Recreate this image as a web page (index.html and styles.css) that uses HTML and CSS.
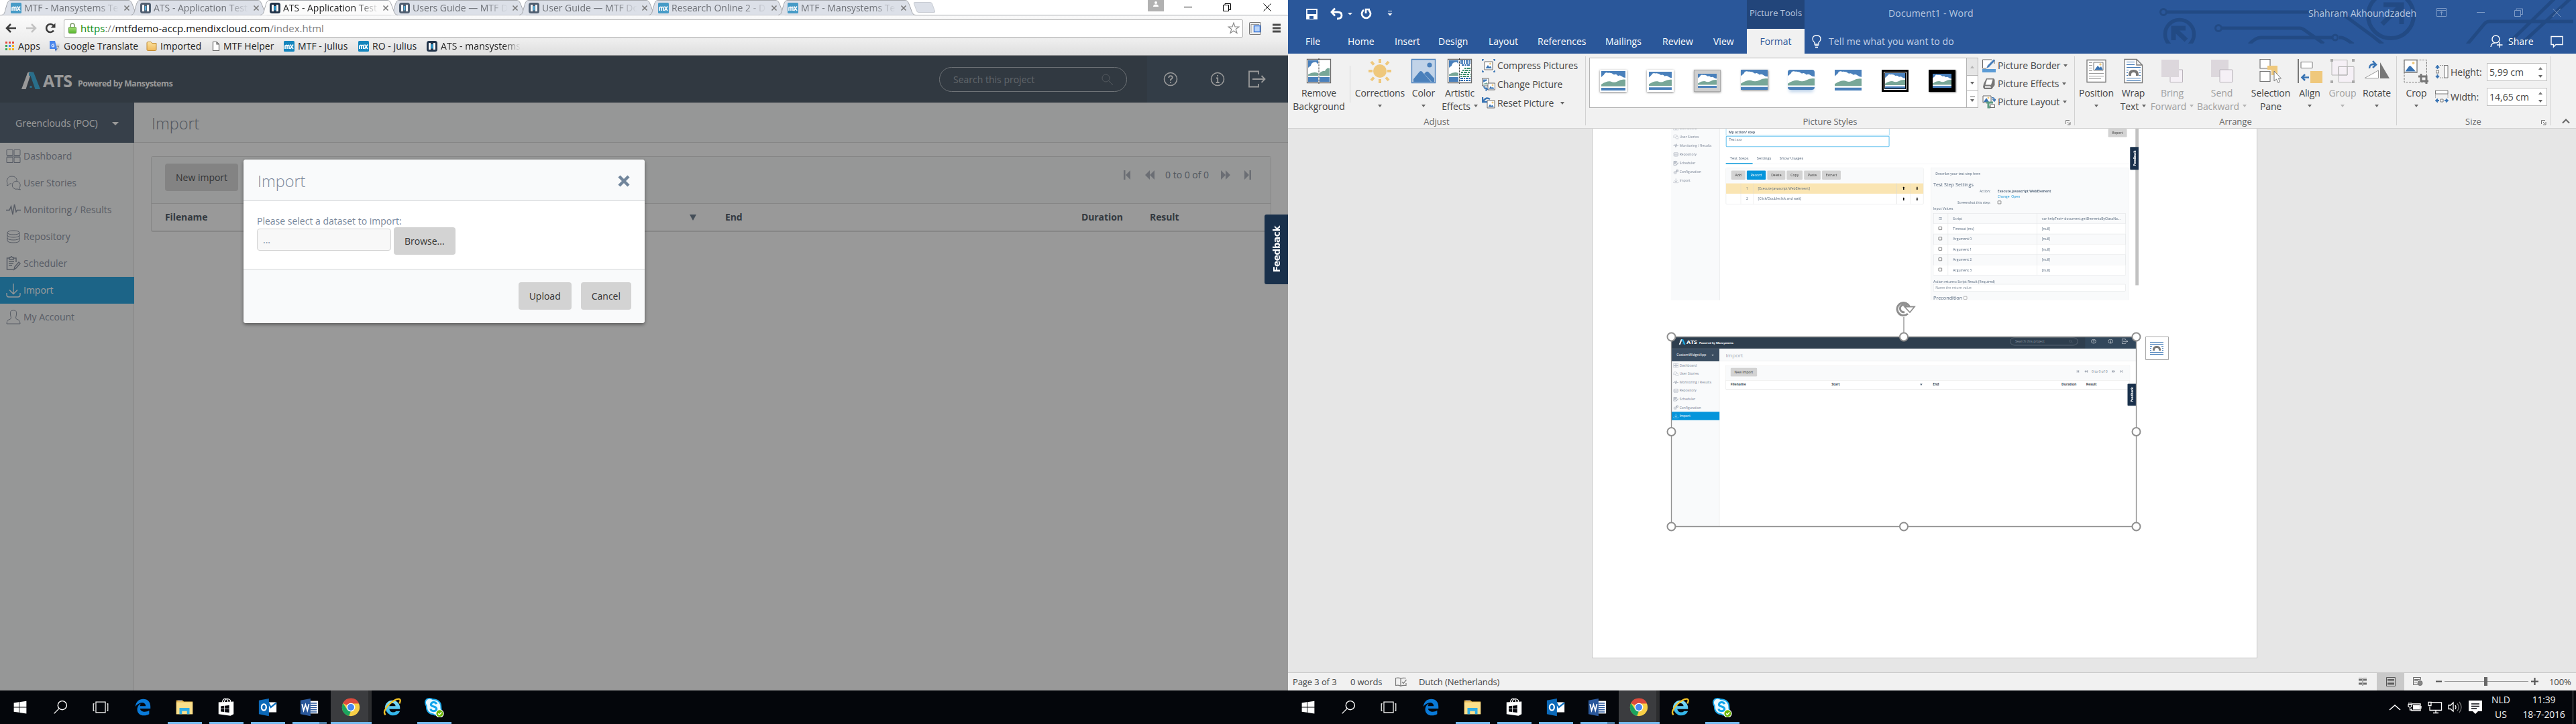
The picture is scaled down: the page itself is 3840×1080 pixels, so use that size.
FILE: index.html
```html
<!DOCTYPE html>
<html lang="en">
<head>
<meta charset="utf-8">
<title>ATS and Word desktop</title>
<link rel="stylesheet" href="styles.css">
</head>
<body>
<svg class="defs" width="0" height="0" aria-hidden="true">
  <defs>
    <linearGradient id="g-folder" x1="0" y1="0" x2="0" y2="1"><stop offset="0" stop-color="#fbe3a0"/><stop offset="1" stop-color="#f0b95c"/></linearGradient>
    <linearGradient id="g-lock" x1="0" y1="0" x2="0" y2="1"><stop offset="0" stop-color="#a8e07a"/><stop offset="1" stop-color="#56b52c"/></linearGradient>
    <linearGradient id="g-ie" x1="0" y1="0" x2="0" y2="1"><stop offset="0" stop-color="#8be3fb"/><stop offset="1" stop-color="#27aee6"/></linearGradient>
  </defs>
  <symbol id="tab-shape" viewBox="0 0 205 23"><path d="M0 22.5C5 22 5 18 7 11S10 .5 14 .5H189C193 .5 194 3 197 11S200 22 205 22.5" stroke="#a3a6ab"/></symbol>
  <symbol id="mx" viewBox="0 0 16 16"><rect width="16" height="16" rx="1.5" fill="#1485bd"/><path d="M2 12V6.500M2 8Q4.500 4.500 5 8V12M5 8Q8 4.500 8 8V12M9.500 5.500L14 12M14 5.500L9.500 12" fill="none" stroke="#fff" stroke-width="1.700"/></symbol>
  <symbol id="ats" viewBox="0 0 16 16"><rect width="16" height="16" rx="3.500" fill="#22344a"/><path d="M3 13V4Q3 3 4 3H6V13ZM10 3H12Q13 3 13 4V13H10Z" fill="#fff"/><path d="M6.800 5H9.200V11.500H6.800Z" fill="#2aa3dc"/></symbol>
  <symbol id="x" viewBox="0 0 10 10"><path d="M1.500 1.500L8.500 8.500M8.500 1.500L1.500 8.500" stroke="#777" stroke-width="1.600"/></symbol>
  <symbol id="logo" viewBox="0 0 28 26"><path d="M0 26L9 2Q10 .5 12 .5H15L13 6L6.500 26Z" fill="#fff"/><path d="M11 .5H18L28 26H20.500L13.500 6L11 6Z" fill="#1fa9e1"/><path d="M9 2Q10 .5 12 .5L9.500 6L8 5Z" fill="#fff"/><path d="M12.500 21h3v3h-3z" fill="#1fa9e1"/></symbol>
  <symbol id="search" viewBox="0 0 18 18"><circle cx="6.500" cy="6.500" r="5.500"/><path d="M10.500 10.500L17 17"/></symbol>
  <symbol id="help" viewBox="0 0 22 22"><circle cx="11" cy="11" r="9.500"/><path d="M8.200 9Q8.500 6.200 11 6.200T13.800 8.600Q13.800 10 11 11.800V13.500M11 15V16.800" stroke-width="1.800"/></symbol>
  <symbol id="info" viewBox="0 0 22 22"><circle cx="11" cy="11" r="9.500"/><path d="M11 5V7M9 9.500H11.200V16M8.700 16H13.700" stroke-width="1.800"/></symbol>
  <symbol id="exit" viewBox="0 0 26 26"><path d="M15 6V1.500H1V24.500H15V20M6 13H24M19.500 8L24.500 13L19.500 18" stroke-width="1.800"/></symbol>
  <symbol id="i-dash" viewBox="0 0 22 22"><path d="M1 1.500H10V9.500H1ZM12 1.500H21V9.500H12ZM1 12.500H10V20.500H1ZM12 12.500H21V20.500H12ZM1 11H21"/></symbol>
  <symbol id="i-story" viewBox="0 0 22 22"><path d="M8 11.500Q5 12 3.500 14L1.500 15L2 11.500Q0 8 2.500 4T9 1Q14 1 16 5.500L16 8M19.500 18.500L21.500 21L17 20A6 6 0 1 1 19.500 18.500"/></symbol>
  <symbol id="i-pulse" viewBox="0 0 22 22"><path d="M0 11.500H5L7.500 6L10 18L12.500 3L15 14L16.500 11.500H22" stroke-width="1.500"/></symbol>
  <symbol id="i-repo" viewBox="0 0 22 22"><path d="M2 5C2 1 20 1 20 5S2 9 2 5V17C2 21 20 21 20 17V5M2 9C2 13 20 13 20 9M2 13C2 17 20 17 20 13"/></symbol>
  <symbol id="i-sched" viewBox="0 0 22 22"><path d="M5 3H1.500V20H11M11 3H15V9M5 2H6.500L8 .5L9.500 2H11V5H5ZM4 8H12M4 11H11M4 14H9M12 20L13 16L19 9L21 11L15 18Z" stroke-width="1.500"/></symbol>
  <symbol id="i-import" viewBox="0 0 22 22"><path d="M11 1V16M5 10.500L11 16.500L17 10.500M1 15V18Q1 21 4 21H18Q21 21 21 18V15" stroke-width="1.300"/></symbol>
  <symbol id="i-user" viewBox="0 0 22 22"><path d="M7.500 12Q5 3 8 1.500T14 1.500T14.500 12Q14 14 19 15.500Q21 17 21 21H1Q1 17 3 15.500Q8 14 7.500 12Z"/></symbol>
  <symbol id="i-conf" viewBox="0 0 22 22"><circle cx="8" cy="14" r="6"/><circle cx="8" cy="14" r="2.500"/><path d="M13 2H20V9H14ZM12 9L18 3" stroke-width="1.800"/></symbol>
  <symbol id="pg-first" viewBox="0 0 12 14"><path d="M1 0H3.500V14H1ZM11 0V14L4 7Z"/></symbol>
  <symbol id="pg-prev" viewBox="0 0 16 14"><path d="M8 0V14L1 7ZM15 0V14L8 7Z"/></symbol>
  <symbol id="scene" viewBox="0 0 36 32" preserveAspectRatio="none"><path d="M0 0H36V32H0Z" fill="#fff"/><path d="M0 0H36V11Q33 11 31 9Q28 6 25 8Q22 4 19 6Q15 2 10 3Q6 1 4 6L0 10Z" fill="#4a80bb"/><path d="M0 25V22Q8 16 14 17Q19 20 24 17Q30 13 36 14V25Z" fill="#78a798"/><path d="M0 27.500H36V32H0Z" fill="#4a80bb"/></symbol>
  <symbol id="w-remove" viewBox="0 0 38 38"><path d="M1.500 1.500H36.500V36.500H1.500Z" fill="#fff" stroke="#6b6b6b" stroke-width="1.300"/><path d="M3 3H18V9Q15 4 12 6Q8 6 7 11L3 14Z" fill="#4a80bb"/><path d="M3 24Q11 19 18 22V26H3ZM20 22Q25 18 28 19Q31 13 35 15V26H20Z" fill="#78a798"/><path d="M3 28H18V35H3ZM20 28H35V35H20Z" fill="#4a80bb"/><path d="M19 0V38" stroke="#444" stroke-dasharray="3 1.500"/></symbol>
  <symbol id="w-art" viewBox="0 0 38 38"><path d="M1.500 1.500H36.500V36.500H1.500Z" fill="#fff" stroke="#6b6b6b" stroke-width="1.300"/><path d="M3 3H17V9Q15 4 12 6Q8 6 7 11L3 14Z" fill="#4a80bb"/><path d="M3 24Q11 19 17 22V26H3Z" fill="#78a798"/><path d="M3 28H17V35H3Z" fill="#4a80bb"/><path d="M20 4H35M20 7H35M22 10H35M20 30H35M20 33H35" stroke="#2e6bb0" stroke-width="2" stroke-dasharray="4 1 2 1"/><path d="M26 15H35M23 18H35M21 21H35M20 24H35M20 27H35" stroke="#3f9070" stroke-width="2" stroke-dasharray="3 1 5 1"/><path d="M18.500 0V38" stroke="#444" stroke-dasharray="3 1.500"/></symbol>
  <symbol id="w-sun" viewBox="0 0 38 38"><circle cx="19" cy="19" r="10" fill="#efc87c"/><path d="M19 1V7M19 31V37M2 19H8M30 19H36M6 5L10 9.500M28 28.500L32 33M32 5L28 9.500M10 28.500L6 33" stroke="#efc87c" stroke-width="4"/></symbol>
  <symbol id="w-color" viewBox="0 0 38 38"><path d="M1.500 1.500H36.500V36.500H1.500Z" fill="#c1d3e8" stroke="#4a80bb" stroke-width="1.300"/><circle cx="28" cy="10" r="3.600" fill="#4a80bb"/><path d="M4 35V31L13 20Q15 18 17 20L30 35ZM20 23L23 20Q25 19 27 21L35 30V35H31Z" fill="#4a80bb"/></symbol>
  <symbol id="w-comp" viewBox="0 0 20 20"><path d="M4 4H16V16H4Z" fill="#fff" stroke="#666"/><path d="M5.500 14L9 9L11 12L12.500 10.500L15 14Z" fill="#3873b3"/><circle cx="12.500" cy="7" r="1.500" fill="#efc87c"/><path d="M0 1H3M1 0V3M17 1H20M19 0V3M0 19H3M1 17V20M17 19H20M19 17V20" stroke="#3873b3" stroke-width="1.500"/></symbol>
  <symbol id="w-change" viewBox="0 0 20 20"><path d="M.5 1H10V12H.5Z" fill="#fff" stroke="#666"/><path d="M2 2.500H8V4L2 7Z" fill="#4a80bb"/><path d="M2 9L8 7V10H2Z" fill="#78a798"/><path d="M9 8H19.500V18H9Z" fill="#fff" stroke="#666"/><path d="M10.500 16.500L13 12.500L15 15L16.500 13.500L18.500 16.500Z" fill="#3873b3"/><circle cx="16" cy="11" r="1.400" fill="#efc87c"/><path d="M3 12Q3 17 8 17M5.500 14.500L8.500 17L5.500 19.500" fill="none" stroke="#3873b3" stroke-width="1.600"/></symbol>
  <symbol id="w-reset" viewBox="0 0 20 20"><path d="M8 6H19V17H8Z" fill="#fff" stroke="#666"/><path d="M9.500 15.500L12 11.500L14 14L15.500 12.500L18 15.500Z" fill="#3873b3"/><circle cx="16" cy="9" r="1.500" fill="#efc87c"/><path d="M2 7Q6 0 12 4M1 1V8H8" fill="none" stroke="#3873b3" stroke-width="2.400"/></symbol>
  <symbol id="w-border" viewBox="0 0 20 20"><path d="M14 1H.5V14H6M18 7V1" fill="#fff" stroke="#666"/><path d="M6 14L8 9.500L17 .5L19 2.500L10 12Z" fill="#4a80bb"/><path d="M0 15H20V20H0Z" fill="#5b9bd5"/></symbol>
  <symbol id="w-effect" viewBox="0 0 20 20"><path d="M6 2H17L18.500 4V12L14 18H3L1 15L2 10Z" fill="#777"/><path d="M7 3.500H15.500L13 11.500H4.500Z" fill="#fff"/><path d="M4 13H12L13 16H4Z" fill="#d5d5d5"/></symbol>
  <symbol id="w-layout" viewBox="0 0 20 20"><path d="M1 1H13V11H1Z" fill="#fff" stroke="#666"/><path d="M2 10L6 4L10 10Z" fill="#3873b3"/><circle cx="9" cy="4" r="1.500" fill="#efc87c"/><path d="M6 11H16M9 11V18H12" fill="none" stroke="#5d9c83" stroke-width="3"/><path d="M12 14H18.500V18.500H12Z" fill="#fff" stroke="#666"/><path d="M14 4Q18 3 18 7M15.500 6L18 9L20 6" fill="none" stroke="#3873b3" stroke-width="1.600"/></symbol>
  <symbol id="w-pos" viewBox="0 0 38 38"><path d="M5 2.500H33V35.500H5Z" fill="#fff" stroke="#777" stroke-width="1.300"/><path d="M8 6.500H13M8 10.500H13M8 14.500H13M8 18.500H13M8 22.500H30M8 26.500H30M8 30.500H26" stroke="#9a9a9a"/><path d="M15 6H29V18H15Z" fill="#fff" stroke="#777"/><path d="M16.500 17L21 11L24 14L26 12L28.500 17Z" fill="#3873b3"/><circle cx="25" cy="9" r="1.700" fill="#efc87c"/></symbol>
  <symbol id="w-wrap" viewBox="0 0 38 38"><path d="M6 1.500H24L32.500 10V36.500H6ZM24 1.500V10H32.500" fill="#fff" stroke="#777" stroke-width="1.300"/><path d="M9 5.500H21M9 9.500H21M9 13.500H30M9 17.500H12M27 17.500H30M9 21.500H11M28 21.500H30M9 25.500H11M28 25.500H30M9 29.500H30M9 33.500H30" stroke="#3873b3" stroke-width="1.200"/><path d="M14 26V24Q14 19 19.500 19T25 24V26" fill="none" stroke="#777" stroke-width="4"/></symbol>
  <symbol id="w-bring" viewBox="0 0 38 38"><path d="M16 17H34.500V35.500H16Z" fill="#f5f0f6" stroke="#b9b2ba"/><path d="M3 2H29V28H3Z" fill="#dcd7dc"/></symbol>
  <symbol id="w-send" viewBox="0 0 38 38"><path d="M3 2H29V28H3Z" fill="#dcd7dc"/><path d="M16 17H34.500V35.500H16Z" fill="#f5f0f6" stroke="#b9b2ba"/></symbol>
  <symbol id="w-select" viewBox="0 0 38 38"><path d="M3 1.500H18V15H3ZM3 19.500H18V34.500H3Z" fill="#fff" stroke="#777" stroke-width="1.200"/><path d="M14 11H29V25H20V17H14Z" fill="#efc87c"/><path d="M24 19V34L27.500 31L30 36.500L32.500 35L30.500 30H34.500Z" fill="#fff" stroke="#777"/></symbol>
  <symbol id="w-align" viewBox="0 0 38 38"><path d="M2 1V37" stroke="#777" stroke-width="2"/><path d="M6 5.500H23V14.500H6Z" fill="#fff" stroke="#777"/><path d="M20 19H38V37H20Z" fill="#efc87c"/><path d="M18 28.500H8M12 24L7.500 28.500L12 33" fill="none" stroke="#3873b3" stroke-width="2.500"/></symbol>
  <symbol id="w-group" viewBox="0 0 38 38"><path d="M3 2.500H26V25H3ZM13 12.500H36V35.500H13Z" fill="#f5f0f6" stroke="#b5b5b5"/><path d="M13 12.500H26V25H13Z" fill="none" stroke="#b5b5b5"/><path d="M1 1H5V5H1ZM33 1H37V5H33ZM1 33H5V37H1ZM33 33H37V37H33Z" fill="#aaa"/></symbol>
  <symbol id="w-rotate" viewBox="0 0 38 38"><path d="M1 29.500L21.500 18V29.500Z" fill="#fff" stroke="#999"/><path d="M24 6V30H38Z" fill="#777"/><path d="M8 15Q8 8 16 9M13 4L18 9.500L13 14" fill="none" stroke="#3873b3" stroke-width="2.600"/></symbol>
  <symbol id="w-crop" viewBox="0 0 38 38"><path d="M1 2.500H34.500V35.500H1Z" fill="none" stroke="#777" stroke-dasharray="3 1.500"/><path d="M1 2.500H20V21H1Z" fill="#fff" stroke="#777" stroke-width="1.300"/><path d="M2.500 19.500L8 12Q10 10 12 13L18 19.500Z" fill="#3873b3"/><circle cx="14.500" cy="7" r="2" fill="#efc87c"/><path d="M26 23V34H37M22 27H34V38" fill="none" stroke="#777" stroke-width="3"/></symbol>
  <symbol id="w-height" viewBox="0 0 20 20"><path d="M14 .5H19V19H14Z" fill="#fff" stroke="#777"/><path d="M7 .5H14M7 19H14" stroke="#777" stroke-dasharray="1.500 1.500"/><path d="M1.500 8H5.500V12H1.500Z" fill="#fff" stroke="#777"/><path d="M3.500 6V1M1 4L3.500 1L6 4M3.500 14V19M1 16L3.500 19L6 16" fill="none" stroke="#3873b3" stroke-width="1.800"/></symbol>
  <symbol id="w-width" viewBox="0 0 20 20"><path d="M.5 1H19V6H.5Z" fill="#fff" stroke="#777"/><path d="M.5 7V13M19 7V13" stroke="#777" stroke-dasharray="1.500 1.500"/><path d="M8 14H12V18H8Z" fill="#fff" stroke="#777"/><path d="M6 16H1M4 13.500L1 16L4 18.500M14 16H19M16 13.500L19 16L16 18.500" fill="none" stroke="#3873b3" stroke-width="1.800"/></symbol>
  <symbol id="launch" viewBox="0 0 8 8"><path d="M.5 6V.5H6M3 3L6 6M7 3V7H3" fill="none" stroke="#777"/></symbol>
  <symbol id="t-win" viewBox="0 0 32 32"><path d="M6 9L14 7.800V15.500H6ZM15 7.600L26 6V15.500H15ZM6 16.500H14V24.300L6 23.200ZM15 16.500H26V26L15 24.500Z" fill="#fff"/></symbol>
  <symbol id="t-search" viewBox="0 0 32 32"><circle cx="19" cy="13" r="7" fill="none" stroke="#fff" stroke-width="1.500"/><path d="M14 18L6 26" stroke="#fff" stroke-width="1.500"/></symbol>
  <symbol id="t-view" viewBox="0 0 32 32"><path d="M8.500 7.500H23.500V24.500H8.500ZM6 10.500H4.500V21.500H6M26 10.500H27.500V21.500H26" fill="none" stroke="#fff" stroke-width="1.300"/></symbol>
  <symbol id="t-edge" viewBox="0 0 32 32"><path d="M4 15C5 7 10 3 16.500 3C24 3 28 8 28 15V18H11.500C12 23 20 25 26 21V27C17 32 6 28 7 18C7.500 14 10 11 13 10C11.500 11.500 11.500 13 11.500 14H20.500C20.500 7 10 7 4 15Z" fill="#0a7ad8"/></symbol>
  <symbol id="t-folder" viewBox="0 0 32 32"><path d="M3 5H13L15 7H29V27H3Z" fill="#e6b34a"/><path d="M3 8H29V27H3Z" fill="#fbdf8b"/><path d="M8 27V17H24V27H20V22H12V27Z" fill="#32aee6"/><path d="M5 6H12" stroke="#fff"/></symbol>
  <symbol id="t-store" viewBox="0 0 32 32"><path d="M10 8Q11 2 15 2.500T19 8M13 8Q15 1 20 3T22 8" fill="none" stroke="#fff" stroke-width="1.300"/><path d="M4 8L28 7V27L23 29.500L4 27Z" fill="#fff"/><path d="M7.500 14.500L13 13.700V18H7.500ZM14 13.600L21 12.800V18H14ZM7.500 19H13V23.500L7.500 23ZM14 19H21V24.500L14 23.700Z" fill="#05060c"/></symbol>
  <symbol id="t-outlook" viewBox="0 0 32 32"><path d="M16 8H30V24H16Z" fill="#fff"/><path d="M17 9L21 16L30 9" fill="none" stroke="#0e6fbf" stroke-width="2.500"/><path d="M2 5L18 2V30L2 27Z" fill="#0c69b8"/><ellipse cx="10" cy="16" rx="3.700" ry="5" fill="none" stroke="#fff" stroke-width="2.400"/></symbol>
  <symbol id="t-word" viewBox="0 0 32 32"><path d="M16 6H30V26H16Z" fill="#fff"/><path d="M18 9.500H28M18 13H28M18 16.500H28M18 20H28M18 23.500H28" stroke="#2a579a" stroke-width="1.600"/><path d="M2 5L18 2V30L2 27Z" fill="#2a579a"/><path d="M4.500 11L7 21L10 12L13 21L15.500 11" fill="none" stroke="#fff" stroke-width="2"/></symbol>
  <symbol id="t-chrome" viewBox="0 0 32 32"><circle cx="16" cy="16" r="14" fill="#f7ce46"/><path d="M16 16L3.500 9.500A14 14 0 0 1 29 10H16Z" fill="#dc4a3d"/><path d="M3.500 9.500L10 19.500L16 22L13 29.800A14 14 0 0 1 3.500 9.500Z" fill="#1ba35e"/><circle cx="16" cy="16" r="6.800" fill="#fff"/><circle cx="16" cy="16" r="5.300" fill="#4886f0"/></symbol>
  <symbol id="t-ie" viewBox="0 0 32 32"><path d="M4 17A12 12 0 0 1 28 17V19H11Q12 24 17 24Q20 24 22 22H28Q25 29 16.500 29T4 17ZM11 14H21Q20 9.500 16 9.500T11 14Z" fill="url(#g-ie)"/><path d="M5 28C-3 22 18 1 27 3Q30 4 27 10" fill="none" stroke="#f5c426" stroke-width="2.500"/></symbol>
  <symbol id="t-skype" viewBox="0 0 32 32"><path d="M2 8Q3 2 9 2Q12 2 14 3.500Q27 4 27 16Q29 25 22 28Q17 29 15 27Q4 26 4 14Q2 11 2 8Z" fill="#e9f8ff" stroke="#1cabee" stroke-width="2"/><path d="M20 11Q19 8 15.500 8T11 11.500Q11 14 15.500 15T20 19Q20 22 15.500 22T10.500 18.500" fill="none" stroke="#12a5eb" stroke-width="3.200"/><circle cx="25" cy="26" r="6" fill="#6bb700" stroke="#fff" stroke-width="1.300"/><path d="M22.500 26L24.500 28L28 24" fill="none" stroke="#fff" stroke-width="1.600"/></symbol>
</svg>

<div class="desktop">
<section class="monitor">
  <div class="browser">
    <div class="tabstrip">
      <div class="tab"><svg class="shape"><use href="#tab-shape"/></svg><svg class="fav"><use href="#mx"/></svg><span class="name">MTF - Mansystems Te</span><svg class="shut"><use href="#x"/></svg></div>
      <div class="tab"><svg class="shape"><use href="#tab-shape"/></svg><svg class="fav"><use href="#ats"/></svg><span class="name">ATS - Application Test</span><svg class="shut"><use href="#x"/></svg></div>
      <div class="tab current"><svg class="shape"><use href="#tab-shape"/></svg><svg class="fav"><use href="#ats"/></svg><span class="name">ATS - Application Test</span><svg class="shut"><use href="#x"/></svg></div>
      <div class="tab"><svg class="shape"><use href="#tab-shape"/></svg><svg class="fav"><use href="#ats"/></svg><span class="name">Users Guide — MTF D</span><svg class="shut"><use href="#x"/></svg></div>
      <div class="tab"><svg class="shape"><use href="#tab-shape"/></svg><svg class="fav"><use href="#ats"/></svg><span class="name">User Guide — MTF Do</span><svg class="shut"><use href="#x"/></svg></div>
      <div class="tab"><svg class="shape"><use href="#tab-shape"/></svg><svg class="fav"><use href="#mx"/></svg><span class="name">Research Online 2 - D</span><svg class="shut"><use href="#x"/></svg></div>
      <div class="tab"><svg class="shape"><use href="#tab-shape"/></svg><svg class="fav"><use href="#mx"/></svg><span class="name">MTF - Mansystems Te</span><svg class="shut"><use href="#x"/></svg></div>
      <span class="newtab"></span>
      <div class="wincontrols">
        <svg width="24" height="17"><path d="M0 0H24V17H0Z" fill="#b1b1b1"/><circle cx="12" cy="4" r="2" fill="#fff"/><path d="M8 10Q8 6.500 12 6.500T16 10Z" fill="#fff"/></svg>
        <svg width="12" height="20"><path d="M0 10.500H12" stroke="#000"/></svg>
        <svg width="12" height="20"><path d="M.5 7.500H8.500V16.500H.5ZM3 7.500V5.500H11.500V14.500H9" fill="none" stroke="#000"/></svg>
        <svg width="12" height="20"><path d="M.5 5.500L11.500 16.500M11.500 5.500L.5 16.500" stroke="#000"/></svg>
      </div>
    </div>
    <div class="toolbar">
      <svg width="80" height="18" class="nav"><path d="M16 9H2M8 3L2 9L8 15" fill="none" stroke="#3c3c3c" stroke-width="2.500"/><path d="M31 9H45M39 3L45 9L39 15" fill="none" stroke="#c3c3c3" stroke-width="2.500"/><path d="M72 12.500A6 6 0 1 1 72 5.500" fill="none" stroke="#3c3c3c" stroke-width="2.600"/><path d="M74.500 1.500V8.500H67.500Z" fill="#3c3c3c"/></svg>
      <div class="omnibox">
        <svg width="12" height="16"><path d="M3 7V4Q3 1 6 1T9 4V7" fill="none" stroke="#7d9a6a" stroke-width="1.600"/><rect x=".5" y="6.500" width="11" height="9" rx="1" fill="url(#g-lock)" stroke="#5a9440"/></svg>
        <span class="url"><i class="ok">https</i><i class="dim">://</i>mtfdemo-accp.mendixcloud.com<i class="dim">/index.html</i></span>
        <svg width="18" height="18" viewBox="0 0 18 18"><path d="M9 1L11 7H17L12.200 10.500L14 16.500L9 13L4 16.500L5.800 10.500L1 7H7Z" fill="none" stroke="#888" stroke-width="1.100"/></svg>
      </div>
      <svg width="18" height="19" class="ext"><rect x=".5" y=".5" width="17" height="18" rx="1" fill="#ececec" stroke="#777"/><path d="M3 3V16M3 3.500H15" stroke="#999"/><path d="M7.500 5.500H16.500V14.500H7.500Z" fill="#b8d3f8" stroke="#3d78d8" stroke-width="1.500"/></svg>
      <svg width="14" height="14"><path d="M1 2H13M1 7H13M1 12H13" stroke="#4a4a4a" stroke-width="3"/></svg>
    </div>
    <div class="bookmarks">
      <span><svg width="14" height="14" viewBox="0 0 14 14"><path d="M0 0H3V3H0ZM5 0H8V3H5ZM10 0H13V3H10Z" fill="#e3493b"/><path d="M0 5H3V8H0Z" fill="#35a853"/><path d="M5 5H8V8H5Z" fill="#4285f4"/><path d="M10 5H13V8H10ZM5 10H8V13H5ZM10 10H13V13H10Z" fill="#f2b512"/><path d="M0 10H3V13H0Z" fill="#35a853"/></svg>Apps</span>
      <span><svg width="16" height="16"><path d="M6 4H15V16H9Z" fill="#dcdcdc"/><path d="M0 0H8L11 12H0Z" fill="#4a86ec"/><path d="M8 12H11L9 16Z" fill="#2b5cb5"/><path d="M7 5H5Q3 5 3 7T5 9T7 7H5" fill="none" stroke="#fff"/><path d="M10 8H14M12 7V8M13.500 8Q13 11 10.500 13" fill="none" stroke="#888"/></svg>Google Translate</span>
      <span><svg width="16" height="16"><path d="M1 3Q1 1.500 2.500 1.500H7L8.500 3.500H15V13Q15 14.500 13.500 14.500H2.500Q1 14.500 1 13Z" fill="url(#g-folder)" stroke="#c08a33"/></svg>Imported</span>
      <span><svg width="12" height="16"><path d="M1.500 1.500H7L10.500 5V14.500H1.500ZM7 1.500V5H10.500" fill="#fff" stroke="#666" stroke-width="1.200"/></svg>MTF Helper</span>
      <span><svg width="16" height="16"><use href="#mx"/></svg>MTF - julius</span>
      <span><svg width="16" height="16"><use href="#mx"/></svg>RO - julius</span>
      <span class="fade"><svg width="16" height="16"><use href="#ats"/></svg>ATS - mansystems</span>
    </div>

    <div class="viewport">
      <div class="app">
        <header class="apphead">
          <svg class="logo"><use href="#logo"/></svg><b class="brand">ATS</b><b class="tagline">Powered by Mansystems</b>
          <div class="find"><span>Search this project</span><svg width="18" height="18"><use href="#search"/></svg></div>
          <div class="headicons"><svg width="22" height="22"><use href="#help"/></svg><svg width="22" height="22"><use href="#info"/></svg><svg width="26" height="26"><use href="#exit"/></svg></div>
        </header>
        <nav class="side">
          <div class="project"><span>Greenclouds (POC)</span><i class="caret"></i></div>
          <a><svg><use href="#i-dash"/></svg>Dashboard</a>
          <a><svg><use href="#i-story"/></svg>User Stories</a>
          <a><svg><use href="#i-pulse"/></svg>Monitoring / Results</a>
          <a><svg><use href="#i-repo"/></svg>Repository</a>
          <a><svg><use href="#i-sched"/></svg>Scheduler</a>
          <a class="on"><svg><use href="#i-import"/></svg>Import</a>
          <a><svg><use href="#i-user"/></svg>My Account</a>
        </nav>
        <main class="main">
          <h1>Import</h1>
          <div class="panel">
            <div class="panelbar"><span class="btn">New import</span>
              <div class="pager"><svg width="12" height="14"><use href="#pg-first"/></svg><svg width="16" height="14"><use href="#pg-prev"/></svg><span>0 to 0 of 0</span><svg class="flip" width="16" height="14"><use href="#pg-prev"/></svg><svg class="flip" width="12" height="14"><use href="#pg-first"/></svg></div>
            </div>
            <div class="heads"><span>Filename</span><span></span><i class="sort"></i><span>End</span><span>Duration</span><span>Result</span></div>
          </div>
        </main>
      </div>
      <div class="shade"></div>
      <div class="feedback"><span>Feedback</span></div>
      <div class="modal">
        <div class="mhead"><span>Import</span><svg width="20" height="18" viewBox="0 0 20 18"><path d="M3 2L17 16M17 2L3 16" stroke="#72869c" stroke-width="4.500"/></svg></div>
        <div class="mbody"><label>Please select a dataset to import:</label><div class="pick"><span class="field">...</span><span class="btn">Browse...</span></div></div>
        <div class="mfoot"><span class="btn">Upload</span><span class="btn">Cancel</span></div>
      </div>
    </div>
  </div>
  <footer class="taskbar">
    <span><svg><use href="#t-win"/></svg></span><span><svg><use href="#t-search"/></svg></span><span><svg><use href="#t-view"/></svg></span><span class="slot"><svg><use href="#t-edge"/></svg></span><span class="slot run"><svg><use href="#t-folder"/></svg></span><span class="slot run"><svg><use href="#t-store"/></svg></span><span class="slot run"><svg><use href="#t-outlook"/></svg></span><span class="slot run many"><svg><use href="#t-word"/></svg></span><span class="slot run active"><svg><use href="#t-chrome"/></svg></span><span class="slot"><svg><use href="#t-ie"/></svg></span><span class="slot run"><svg><use href="#t-skype"/></svg></span>
  </footer>
</section>

<section class="monitor">
  <div class="word">
    <div class="wtitle">
      <svg class="circuit" width="630" height="65" fill="none" stroke="#224a84" stroke-width="5"><circle cx="15" cy="18" r="4.500" stroke-width="3"/><path d="M20 18H278L327 54Q337 62 342 66"/><circle cx="97" cy="42" r="4.500" stroke-width="3"/><path d="M102 42H218Q222 42 227 46L254 65M143 66Q152 56 160 56H267M277 56H280Q285 56 298 66"/><circle cx="271" cy="56" r="4" stroke-width="3"/><circle cx="39" cy="51" r="21.500" stroke-width="5.500"/><circle cx="354" cy="23" r="34" stroke-width="6"/><path d="M30 60V42H48M31 43L49 60M343 7H370V36M369 8L341 36" stroke-width="7"/><path d="M468 66L494 35Q497 32 501 32H626M550 64L626 -6M528 66L604 -8"/></svg>
      <div class="qat"><svg width="130" height="22" viewBox="0 0 130 22" fill="none" stroke="#fff"><path d="M1 4H16V18H1Z" stroke-width="1.800"/><path d="M1 11H16V18H1Z" fill="#fff" stroke="none"/><path d="M5 14H11V18H5Z" fill="#2a579a" stroke="none"/><path d="M39 8H47Q53 8 53 13T46 18M43 2.500L38 8L43 13.500" stroke-width="2.800"/><path d="M62 9H69L65.500 12.500Z" fill="#fff" stroke="none"/><path d="M86 5A6.500 6.500 0 1 0 93 5M89 10V4H95" stroke-width="2.700"/><path d="M122 6.500H128" /><path d="M121.500 10H128.500L125 13.500Z" fill="#fff" stroke="none"/></svg></div>
      <span class="ptools">Picture Tools</span>
      <span class="doc">Document1 - Word</span>
      <span class="who">Shahram Akhoundzadeh</span>
      <svg class="wctl" width="190" height="20" fill="none" stroke="#7e9bc6"><path d="M.5 3.500H14.500V15.500H.5ZM1 6.500H14M7.500 14V8M5 10.500L7.500 8L10 10.500M60 9.500H72M116.500 6.500H125.500V15.500H116.500ZM119 6V4H128.500V12.500H126M173.500 4L185 16M185 4L173.500 16"/></svg>
    </div>
    <nav class="wtabs">
      <span>File</span><span>Home</span><span>Insert</span><span>Design</span><span>Layout</span><span>References</span><span>Mailings</span><span>Review</span><span>View</span><b>Format</b>
      <svg width="14" height="20" viewBox="0 0 14 20"><path d="M4 14V11.500Q1 9 1 6Q1 1 7 1T13 6Q13 9 10 11.500V14Z" fill="none" stroke="#fff" stroke-width="1.300"/><path d="M4 15.500H10M5 18.500H9" stroke="#fff" stroke-width="1.500"/></svg><em>Tell me what you want to do</em>
      <svg width="20" height="20" viewBox="0 0 20 20" fill="none" stroke="#fff" stroke-width="1.400"><circle cx="8.500" cy="6.500" r="5.500"/><path d="M1 18Q2 12 7 12M14 11V19M10 15H18.500"/></svg><span>Share</span>
      <svg width="20" height="20" viewBox="0 0 20 20"><path d="M1 2.500H18V14.500H8L4.500 18V14.500H1Z" fill="none" stroke="#fff" stroke-width="1.400"/></svg>
    </nav>
    <div class="ribbon">
      <div class="group adjust">
        <div class="tools">
          <div class="big"><svg><use href="#w-remove"/></svg><p>Remove</p><p>Background</p></div>
          <i class="rule"></i>
          <div class="big"><svg><use href="#w-sun"/></svg><p>Corrections</p><p><u></u></p></div>
          <div class="big"><svg><use href="#w-color"/></svg><p>Color</p><p><u></u></p></div>
          <div class="big"><svg><use href="#w-art"/></svg><p>Artistic</p><p>Effects <u></u></p></div>
          <div class="small"><p><svg><use href="#w-comp"/></svg>Compress Pictures</p><p><svg><use href="#w-change"/></svg>Change Picture</p><p><svg><use href="#w-reset"/></svg>Reset Picture<u></u></p></div>
        </div>
        <div class="caption">Adjust</div>
      </div>
      <div class="group styles">
        <div class="tools">
          <div class="gallery">
            <div class="thumbs"><svg class="f1"><use href="#scene"/></svg><svg class="f2"><use href="#scene"/></svg><svg class="f3"><use href="#scene"/></svg><svg class="f4"><use href="#scene"/></svg><svg class="f5"><use href="#scene"/></svg><svg class="f6"><use href="#scene"/></svg><svg class="f7"><use href="#scene"/></svg><svg class="f8"><use href="#scene"/></svg></div>
            <div class="gscroll"><span><i class="upc"></i></span><span><u></u></span><span class="more"><u></u></span></div>
          </div>
          <div class="small"><p><svg><use href="#w-border"/></svg>Picture Border<u></u></p><p><svg><use href="#w-effect"/></svg>Picture Effects<u></u></p><p><svg><use href="#w-layout"/></svg>Picture Layout<u></u></p></div>
        </div>
        <div class="caption">Picture Styles<svg class="launch"><use href="#launch"/></svg></div>
      </div>
      <div class="group arrange">
        <div class="tools">
          <div class="big"><svg><use href="#w-pos"/></svg><p>Position</p><p><u></u></p></div>
          <div class="big"><svg><use href="#w-wrap"/></svg><p>Wrap</p><p>Text <u></u></p></div>
          <div class="big off"><svg><use href="#w-bring"/></svg><p>Bring</p><p>Forward <u></u></p></div>
          <div class="big off"><svg><use href="#w-send"/></svg><p>Send</p><p>Backward <u></u></p></div>
          <div class="big"><svg><use href="#w-select"/></svg><p>Selection</p><p>Pane</p></div>
          <div class="big"><svg><use href="#w-align"/></svg><p>Align</p><p><u></u></p></div>
          <div class="big off"><svg><use href="#w-group"/></svg><p>Group</p><p><u></u></p></div>
          <div class="big"><svg><use href="#w-rotate"/></svg><p>Rotate</p><p><u></u></p></div>
        </div>
        <div class="caption">Arrange</div>
      </div>
      <div class="group size">
        <div class="tools">
          <div class="big"><svg><use href="#w-crop"/></svg><p>Crop</p><p><u></u></p></div>
          <div class="dims">
            <p><svg><use href="#w-height"/></svg><span>Height:</span><b>5,99 cm<i><i class="upc"></i><u></u></i></b></p>
            <p><svg><use href="#w-width"/></svg><span>Width:</span><b>14,65 cm<i><i class="upc"></i><u></u></i></b></p>
          </div>
        </div>
        <div class="caption">Size<svg class="launch"><use href="#launch"/></svg></div>
      </div>
      <svg class="collapse" width="12" height="8"><path d="M1 6.500L6 1.500L11 6.500" fill="none" stroke="#666" stroke-width="2"/></svg>
    </div>

    <div class="canvas">
      <div class="sheet">
        <div class="shot one"><div class="stepapp">
          <nav class="side">
            <a><svg><use href="#i-dash"/></svg>Dashboard</a>
            <a><svg><use href="#i-story"/></svg>User Stories</a>
            <a><svg><use href="#i-pulse"/></svg>Monitoring / Results</a>
            <a><svg><use href="#i-repo"/></svg>Repository</a>
            <a><svg><use href="#i-sched"/></svg>Scheduler</a>
            <a><svg><use href="#i-conf"/></svg>Configuration</a>
            <a><svg><use href="#i-import"/></svg>Import</a>
          </nav>
          <div class="work">
            <div class="top"><div class="forms"><b>My action/ step</b><span>Test xxx</span></div><span class="btn">Export</span></div>
            <div class="wktabs"><span class="cur">Test Steps</span><span>Settings</span><span>Show Usages</span></div>
            <div class="cols">
              <div class="steps">
                <div class="stepbar"><span class="btn">Add</span><span class="btn pri">Record</span><span class="btn">Delete</span><span class="btn">Copy</span><span class="btn">Paste</span><span class="btn">Extract</span></div>
                <div class="step sel"><span></span><span>1</span><span>[Execute javascript WebElement]</span><span>⬆</span><span>⬇</span></div>
                <div class="step"><span></span><span>2</span><span>[Click/Doubleclick and wait]</span><span>⬆</span><span>⬇</span></div>
              </div>
              <div class="detail">
                <p class="desc">Describe your test step here</p>
                <h2>Test Step Settings</h2>
                <div class="kv"><span>Action:</span><b>Execute javascript WebElement</b><span></span><em>Change&nbsp; Open</em><span>Screenshot this step:</span><i class="box"></i></div>
                <p class="lbl">Input Values</p>
                <div class="vals">
                  <div><span>☑</span><span>Script</span><span>var helpText= document.getElementsByClassNa...</span></div>
                  <div><span><i class="box"></i></span><span>Timeout (ms)</span><span>[null]</span></div>
                  <div><span><i class="box"></i></span><span>Argument 0</span><span>[null]</span></div>
                  <div><span><i class="box"></i></span><span>Argument 1</span><span>[null]</span></div>
                  <div><span><i class="box"></i></span><span>Argument 2</span><span>[null]</span></div>
                  <div><span><i class="box"></i></span><span>Argument 3</span><span>[null]</span></div>
                </div>
                <p class="lbl ret">Action returns: Script Result (Required)</p>
                <p class="inp">Name the return value</p>
                <h2>Precondition <i class="box"></i></h2>
              </div>
            </div>
          </div>
          <div class="vbar"></div>
          <div class="feedback"><span>Feedback</span></div>
        </div></div>

        <div class="shot two">
          <div class="app">
            <header class="apphead">
              <svg class="logo"><use href="#logo"/></svg><b class="brand">ATS</b><b class="tagline">Powered by Mansystems</b>
              <div class="find"><span>Search this project</span><svg width="18" height="18"><use href="#search"/></svg></div>
              <div class="headicons"><svg width="22" height="22"><use href="#help"/></svg><svg width="22" height="22"><use href="#info"/></svg><svg width="26" height="26"><use href="#exit"/></svg></div>
            </header>
            <nav class="side">
              <div class="project"><span>CustomWidgetApp</span><i class="caret"></i></div>
              <a><svg><use href="#i-dash"/></svg>Dashboard</a>
              <a><svg><use href="#i-story"/></svg>User Stories</a>
              <a><svg><use href="#i-pulse"/></svg>Monitoring / Results</a>
              <a><svg><use href="#i-repo"/></svg>Repository</a>
              <a><svg><use href="#i-sched"/></svg>Scheduler</a>
              <a><svg><use href="#i-conf"/></svg>Configuration</a>
              <a class="on"><svg><use href="#i-import"/></svg>Import</a>
            </nav>
            <main class="main">
              <h1>Import</h1>
              <div class="panel">
                <div class="panelbar"><span class="btn">New import</span>
                  <div class="pager"><svg width="12" height="14"><use href="#pg-first"/></svg><svg width="16" height="14"><use href="#pg-prev"/></svg><span>0 to 0 of 0</span><svg class="flip" width="16" height="14"><use href="#pg-prev"/></svg><svg class="flip" width="12" height="14"><use href="#pg-first"/></svg></div>
                </div>
                <div class="heads"><span>Filename</span><span>Start</span><i class="sort"></i><span>End</span><span>Duration</span><span>Result</span></div>
              </div>
            </main>
            <div class="feedback"><span>Feedback</span></div>
          </div>
        </div>
        <svg class="handles" width="710" height="350" fill="#fff" stroke="#8f8f8f"><path d="M8.500 53.500H701.500V336.500H8.500ZM355 24V53" fill="none" stroke-width="1.300"/><path d="M364 13A9.500 9.500 0 1 0 361 19M360 13A5.500 5.500 0 1 0 356 16.500" fill="none" stroke-width="3"/><path d="M356 8.500H371L364 17Z" fill="#fff" stroke-width="1.800"/><g stroke-width="2"><circle cx="8.500" cy="53.500" r="6"/><circle cx="355" cy="53.500" r="6"/><circle cx="701.500" cy="53.500" r="6"/><circle cx="8.500" cy="195" r="6"/><circle cx="701.500" cy="195" r="6"/><circle cx="8.500" cy="336.500" r="6"/><circle cx="355" cy="336.500" r="6"/><circle cx="701.500" cy="336.500" r="6"/></g></svg>
        <svg class="layoutopt" width="35" height="35"><path d="M.5 .5H34.500V34.500H.5Z" fill="#fff" stroke="#a6a6a6"/><path d="M7 8.500H27M7 11.500H27M7 14.500H10M24 14.500H27M7 17.500H9M25 17.500H27M7 20.500H9M25 20.500H27M7 23.500H27M7 26.500H27" stroke="#3873b3"/><path d="M12.500 21V19Q13 15.500 17 15.500T21.500 19V21" fill="none" stroke="#777" stroke-width="3"/></svg>
      </div>
    </div>
    <div class="status">
      <span>Page 3 of 3</span><span>0 words</span><svg width="18" height="15" fill="none" stroke="#777"><path d="M8 2Q5 .5 .5 1.500V12.500Q5 11.500 8 13.500Q10 12 16 12.500V9M8 2V13M8 2Q10 1 16 1.500M10 7L12 9.500L16.500 4" stroke-width="1.200"/></svg><span>Dutch (Netherlands)</span>
      <svg width="14" height="14" fill="none" stroke="#666"><path d="M7 1.500V13M1 1.500H6M1 3.500H6M1 5.500H6M1 7.500H6M1 9.500H6M1 11.500H6M8 1.500H13M8 3.500H13M8 5.500H13M8 7.500H13M8 9.500H13M8 11.500H13"/></svg>
      <i class="lit"><svg width="14" height="14" fill="none" stroke="#555"><path d="M.5 .5H13.500V13.500H.5ZM2 3.500H12M2 5.500H12M2 7.500H12M2 9.500H12M2 11.500H12"/></svg></i>
      <svg width="15" height="14" fill="none" stroke="#666"><path d="M7 11.500H.5V.5H11.500V4M2 3.500H10M2 5.500H8M2 7.500H6"/><circle cx="10.500" cy="9" r="3.500" fill="#888"/></svg>
      <svg width="155" height="16" class="zoom"><path d="M1 7.500H10" stroke="#555" stroke-width="2"/><path d="M14 7.500H139" stroke="#999"/><path d="M73 1H78V14H73Z" fill="#666"/><path d="M143 7.500H154M148.500 2V13" stroke="#555" stroke-width="2.200"/></svg>
      <span>100%</span>
    </div>
  </div>
  <footer class="taskbar">
    <span><svg><use href="#t-win"/></svg></span><span><svg><use href="#t-search"/></svg></span><span><svg><use href="#t-view"/></svg></span><span class="slot"><svg><use href="#t-edge"/></svg></span><span class="slot run"><svg><use href="#t-folder"/></svg></span><span class="slot run"><svg><use href="#t-store"/></svg></span><span class="slot run"><svg><use href="#t-outlook"/></svg></span><span class="slot run many"><svg><use href="#t-word"/></svg></span><span class="slot run active"><svg><use href="#t-chrome"/></svg></span><span class="slot"><svg><use href="#t-ie"/></svg></span><span class="slot run"><svg><use href="#t-skype"/></svg></span>
    <div class="tray">
      <svg class="trayicons" width="140" height="24" fill="none" stroke="#fff" stroke-width="1.300"><path d="M1 16L9 9L17 16" stroke-width="1.600"/><path d="M34 7H47V17H34V14M48 10V14" /><path d="M36 9H46V15.500H36Z" fill="#fff" stroke="none"/><path d="M29 8H34V11Q31.500 13 29 11ZM30 5V8M33 5V8M31.500 12V16H34"/><path d="M63 5H78.500V16.500H61V11M70 17V20M66 20.500H74"/><path d="M59 4.500H63V9.500H59Z"/><path d="M89 9H92L96 5V18L92 14.500H89ZM99 9Q101 12 99 15"/><path d="M102 6.500Q106 12 102 17.500M105 4Q111 12 105 20" stroke="#777"/><path d="M119 2H139V18H133L129 22L125 18H119Z" fill="#fff" stroke="none"/><path d="M123 7H135M123 10.500H135M123 14H131" stroke="#05060c"/></svg>
      <div class="lang"><span>NLD</span><span>US</span></div>
      <div class="clock"><span>11:39</span><span>18-7-2016</span></div>
      <i class="peek"></i>
    </div>
  </footer>
</section>
</div>
</body>
</html>
```
FILE: styles.css
```css
* { box-sizing: border-box; }
body { margin: 0; font: 14px/20px "Open Sans", "Noto Sans", sans-serif; color: #333; }
p, h1, h2 { margin: 0; font-weight: 400; }
i, em { font-style: normal; }
svg { display: block; flex: none; }
.defs { position: absolute; }
.desktop { display: flex; width: 3840px; height: 1080px; overflow: hidden; white-space: nowrap; }
.monitor { width: 1920px; height: 1080px; display: flex; flex-direction: column; }
.browser, .word { height: 1030px; display: flex; flex-direction: column; }

/* browser chrome */
.tabstrip { height: 22px; display: flex; padding-left: 2px; background: #fff; }
.tab { position: relative; width: 193px; height: 23px; padding-left: 14px; display: flex; align-items: center; color: #6d7076; z-index: 1; }
.tab .shape { position: absolute; left: 0; top: 0; width: 205px; height: 23px; fill: #dce0e8; z-index: -1; }
.tab .fav { width: 16px; height: 16px; opacity: .75; }
.tab .name { width: 148px; margin-left: 4px; overflow: hidden; letter-spacing: 0; -webkit-mask-image: linear-gradient(90deg, #000 108px, transparent 142px); mask-image: linear-gradient(90deg, #000 108px, transparent 142px); }
.tab .shut { width: 10px; height: 10px; }
.tab.current { z-index: 2; color: #222; }
.tab.current .shape { fill: #fbfbfb; }
.tab.current .fav { opacity: 1; }
.newtab { width: 28px; height: 16px; margin: 3px 0 0 11px; background: #dce0e8; border: 1px solid #c8ccd3; border-radius: 3px; transform: skewX(20deg); }
.wincontrols { margin-left: auto; display: grid; grid-template-columns: 54px 58px 60px 37px; }
.toolbar { height: 39px; border-top: 1px solid #a3a6ab; background: linear-gradient(#fbfbfb, #ededed); display: flex; align-items: center; padding-left: 8px; }
.omnibox { width: 1758px; height: 27px; margin-left: 7px; padding: 0 4px 0 6px; display: flex; align-items: center; gap: 6px; background: #fff; border: 1px solid #b0b0b0; border-radius: 2px; }
.url { flex: 1; font-size: 15px; color: #111; letter-spacing: .03px; }
.ok { color: #0b8a0b; }
.dim { color: #808080; }
.ext { margin: 0 16px 0 9px; }
.bookmarks { height: 22px; display: grid; grid-template-columns: 66px 144px 98px 107px 111px 102px 140px; padding-left: 8px; background: linear-gradient(#ededed, #dedede); border-bottom: 1px solid #a0a0a0; color: #222; letter-spacing: .05px; }
.bookmarks span { display: flex; height: 16px; align-items: center; gap: 5px; }
.bookmarks .fade { -webkit-mask-image: linear-gradient(90deg, #000 115px, transparent 140px); mask-image: linear-gradient(90deg, #000 115px, transparent 140px); overflow: hidden; height: 20px; margin-top: -2px; }

/* ATS application */
.viewport { position: relative; height: 947px; overflow: hidden; }
.app { position: relative; width: 1920px; height: 947px; display: grid; grid-template: 70px 1fr / 200px 1fr; background: #fff; }
.apphead { grid-column: 1 / 3; display: flex; align-items: center; background: #2e3e4e; color: #fff; padding-left: 32px; }
.logo { width: 28px; height: 26px; margin-top: 3px; }
.brand { width: 56px; padding-left: 4px; font: 700 25px/26px "Open Sans", sans-serif; letter-spacing: -.8px; margin-top: 4px; }
.tagline { font: 700 12.200px/14px "Open Sans", sans-serif; letter-spacing: -.45px; margin-top: 14px; }
.find { width: 280px; height: 37px; margin: 1px 30px 0 auto; padding: 0 19px 0 20px; border: 1px solid #aab2ba; border-radius: 19px; display: flex; align-items: center; justify-content: space-between; color: #8f99a3; }
.find svg { fill: none; stroke: #77828d; }
.headicons { width: 210px; height: 70px; background: #32475b; display: grid; grid-template-columns: 70px 57px 26px; align-items: center; padding-left: 24px; fill: none; stroke: #fff; stroke-width: 1.600; }
.side { background: #f9fafb; border-right: 1px solid #d9d9d9; color: #7b8596; }
.project { height: 60px; margin-right: -1px; background: #3a4d61; color: #fff; display: flex; align-items: center; padding: 2px 0 0 23px; }
.project span { width: 144px; }
.caret { border: 5px solid transparent; border-top: 5px solid #fff; border-bottom: 0; }
.side a { height: 40px; display: flex; align-items: center; gap: 4px; padding-left: 9px; }
.side a svg { width: 22px; height: 22px; fill: none; stroke: #7b8596; }
.side .on { background: #0595db; color: #fff; margin-right: -1px; }
.side .on svg { stroke: #fff; }
.main h1 { height: 60px; padding: 2px 0 0 26px; font: 300 23.500px/58px "Open Sans", sans-serif; background: #f9fafb; border-bottom: 1px solid #d9d9d9; color: #6b7888; }
.panel { margin: 20px 25px 0; border: 1px solid #d9d9d9; border-bottom-width: 2px; border-radius: 3px; height: 113px; }
.panelbar { height: 70px; background: #f9fafb; border-bottom: 1px solid #d9d9d9; display: flex; justify-content: space-between; padding: 10px 28px 0 20px; }
.btn { height: 41px; padding: 0 16px; background: #d3d3d3; border-radius: 4px; color: #333; display: flex; align-items: center; }
.pager { display: flex; align-items: center; height: 34px; color: #6b7888; }
.pager svg { fill: #a2a9b4; }
.pager svg:nth-child(2) { margin: 0 15px 0 20px; }
.pager span { width: 68px; }
.pager svg:nth-child(4) { margin: 0 19px 0 14px; }
.flip { transform: scaleX(-1); }
.heads { display: grid; grid-template-columns: 417px 368px 50px 531px 102px auto; align-items: center; height: 40px; padding-left: 20px; font-weight: 700; color: #333f4d; letter-spacing: -.1px; }
.sort { border: 5px solid transparent; border-top: 9px solid #55687d; border-bottom: 0; width: 10px; margin-left: -3px; }
.shade { position: absolute; inset: 0; background: rgba(51, 51, 51, .5); }
.feedback { position: absolute; right: 0; top: 237px; width: 35px; height: 104px; background: #19304b; border-radius: 3px 0 0 3px; display: flex; align-items: center; justify-content: center; }
.feedback span { writing-mode: vertical-rl; transform: rotate(180deg); color: #fff; font: 700 13.500px/20px "DejaVu Sans", sans-serif; letter-spacing: -.4px; }
.modal { position: absolute; left: 363px; top: 155px; width: 598px; height: 244px; background: #fff; border-radius: 4px; box-shadow: 0 2px 5px rgba(0, 0, 0, .45); overflow: hidden; color: #7a889b; }
.mhead { height: 62px; background: #f9fafb; border-bottom: 1px solid #d5d7d9; display: flex; align-items: center; justify-content: space-between; padding: 3px 21px 0; font: 300 23.500px/30px "Open Sans", sans-serif; }
.mbody { height: 101px; padding: 20px; display: flex; flex-direction: column; }
.mbody label { height: 19px; }
.pick { display: flex; gap: 4px; }
.field { width: 200px; height: 33px; margin-top: 2px; padding: 8px 8px; border: 1px solid #d3d3d3; border-radius: 4px; background: #f8f8f8; line-height: 16px; }
.mfoot { height: 82px; background: #f9fafb; border-top: 1px solid #d5d7d9; display: flex; justify-content: flex-end; gap: 14px; padding: 19px 20px; }

/* taskbar */
.taskbar { height: 50px; background: #04060b; display: flex; }
.taskbar > span { width: 60px; display: flex; align-items: center; justify-content: center; }
.taskbar > .slot { width: 62px; }
.taskbar > span:nth-child(4) { margin-left: 2px; }
.taskbar svg { width: 32px; height: 30px; }
.taskbar .run { background: linear-gradient(#76b9ed, #76b9ed) center bottom / 51px 3px no-repeat; }
.taskbar .many { background: linear-gradient(90deg, #76b9ed 40px, #4d7ea6 40px) 6px bottom / 51px 3px no-repeat; }
.taskbar .active { background: linear-gradient(#76b9ed, #76b9ed) 1px bottom / 61px 3px no-repeat, linear-gradient(90deg, transparent 1px, #3b3c3f 1px 57px, #2c2d2f 57px); }
.tray { margin-left: auto; display: flex; align-items: center; color: #f2f2f2; }
.taskbar .trayicons { width: 140px; height: 24px; margin-right: 12px; }
.lang, .clock { display: flex; flex-direction: column; text-align: center; line-height: 22px; }
.lang { width: 30px; font-size: 14px; }
.clock { width: 68px; margin-left: 15px; letter-spacing: -.2px; }
.peek { width: 1px; height: 50px; background: #777; margin: 0 4px 0 9px; }

/* Word title and tabs */
.word { background: #e6e6e6; }
.wtitle { position: relative; height: 43px; background: #2a579a; color: #b8c8e0; display: grid; grid-template-columns: 684px 86px 125px 626px 191px auto; align-items: start; line-height: 40px; }
.circuit { position: absolute; right: 0; top: 0; z-index: 1; }
.qat { padding: 10px 0 0 27px; }
.ptools { height: 43px; background: #22457a; text-align: center; line-height: 38px; font-size: 13px; }
.doc { grid-column: 4; letter-spacing: .2px; }
.who { grid-column: 5; z-index: 2; }
.wctl { z-index: 2; margin-top: 9px; }
.wtabs { height: 37px; background: #2a579a; color: #fff; display: grid; grid-template-columns: 63px 70px 65px 75px 73px 101px 85px 76px 50px 86px 36px 986px 27px 63px 30px; align-items: center; padding-left: 26px; line-height: 37px; }
.wtabs b { background: #f1f1f1; color: #2a579a; font-weight: 400; text-align: center; height: 37px; }
.wtabs em { color: #c4d2e7; letter-spacing: .1px; }
.wtabs b + svg { justify-self: center; }
.wtabs svg, .wtabs span { z-index: 2; }

/* ribbon */
.ribbon { height: 112px; background: #f1f1f1; border-bottom: 1px solid #d2d2d2; display: flex; position: relative; color: #444; }
.group { height: 103px; margin-top: 4px; border-right: 1px solid #d2d2d2; display: flex; flex-direction: column; }
.tools { height: 87px; display: flex; }
.adjust { width: 444px; }
.styles { width: 729px; }
.arrange { width: 480px; }
.size { width: 229px; }
.caption { position: relative; height: 16px; line-height: 20px; font-size: 13px; text-align: center; color: #666; }
.launch { position: absolute; right: 5px; top: 8px; width: 8px; height: 8px; }
.big { text-align: center; padding-top: 3px; flex: none; }
.big svg { width: 38px; height: 38px; margin: 0 auto 4px; }
.big p { height: 20px; line-height: 20px; display: flex; justify-content: center; align-items: center; gap: 5px; letter-spacing: -.1px; }
.big u { margin-top: -3px; }
u { width: 0; border: 3.500px solid transparent; border-top: 4px solid #666; border-bottom: 0; flex: none; }
.upc { width: 0; border: 3.500px solid transparent; border-bottom: 4px solid #777; border-top: 0; }
.off { color: #a0a0a0; }
.off u { border-top-color: #b5b5b5; }
.rule { width: 1px; height: 55px; background: #d6d6d6; margin-top: 14px; }
.adjust .big:nth-child(1) { width: 92px; }
.adjust .big:nth-child(3) { width: 88px; }
.adjust .big:nth-child(4) { width: 60px; margin-left: -9px; }
.adjust .big:nth-child(5) { width: 62px; margin-left: -7px; }
.small { display: flex; flex-direction: column; }
.small p { height: 28px; display: flex; align-items: center; letter-spacing: -.1px; }
.small svg { width: 20px; height: 20px; margin-right: 3px; }
.small u { margin-left: 10px; }
.adjust .small { margin-left: 2px; }
.styles .small { margin: 0 0 0 6px; }
.styles .small p { height: 27px; }
.styles .small u { margin-left: 5px; }
.gallery { margin: 2px 0 0 5px; width: 580px; height: 75px; background: #fff; border: 1px solid #b5b5b5; display: flex; justify-content: space-between; }
.thumbs { display: grid; grid-template-columns: repeat(8, 70px); padding-top: 17px; justify-items: center; }
.thumbs svg { width: 40px; height: 33px; padding: 2px; background: #fff; }
.thumbs .f1, .thumbs .f2 { box-shadow: 0 1px 3px rgba(0, 0, 0, .5); }
.thumbs .f2 { padding: 3px; }
.thumbs .f3 { background: #cfcfcf; padding: 5px; border: 1px solid #aaa; box-shadow: 0 1px 3px rgba(0, 0, 0, .4); }
.thumbs .f4 { padding: 0; height: 30px; box-shadow: 1px 1px 3px rgba(0, 0, 0, .5); }
.thumbs .f5 { padding: 0; height: 30px; border-radius: 4px; box-shadow: 0 5px 5px -2px #b8cfe8; }
.thumbs .f6 { padding: 0; height: 31px; filter: blur(.7px); }
.thumbs .f7 { padding: 2px; border: 3px solid #000; background: #000; box-shadow: inset 0 0 0 1px #fff; }
.thumbs .f8 { padding: 6px; background: #000; box-shadow: 1px 1px 2px rgba(0, 0, 0, .5); }
.gscroll { width: 17px; border-left: 1px solid #b5b5b5; display: grid; grid-template-rows: 26px 23px 24px; }
.gscroll span { display: flex; align-items: center; justify-content: center; border-bottom: 1px solid #b5b5b5; }
.gscroll span:first-child { background: #e6e6e6; }
.gscroll .upc { border-bottom-color: #b5b5b5; }
.gscroll .more { border-bottom: 0; flex-direction: column; }
.gscroll .more::before { content: ""; width: 7px; height: 1px; background: #666; margin-bottom: 3px; }
.arrange .tools { display: grid; grid-template-columns: 64px 46px 70px 78px 68px 48px 50px 52px; }
.arrange .off { margin: 0 -5px; }
.size .big { width: 58px; }
.dims { padding-top: 10px; }
.dims p { height: 37px; display: flex; align-items: flex-start; line-height: 27px; }
.dims svg { width: 20px; height: 20px; margin: 3px 3px 0 -1px; }
.dims span { width: 54px; }
.dims b { width: 90px; height: 27px; border: 1px solid #c0c0c0; background: #fff; font-weight: 400; padding: 0 6px 0 3px; display: flex; justify-content: space-between; align-items: center; }
.dims b > i { display: flex; flex-direction: column; gap: 8px; }
.collapse { margin: 97px 0 0 17px; }

/* document */
.canvas { height: 811px; padding-left: 453px; }
.sheet { position: relative; width: 992px; height: 790px; background: #fff; border: 1px solid #c6c6c6; border-top: 0; overflow: hidden; }
.shot { position: absolute; overflow: hidden; }
.one { left: 117px; top: 0; width: 697px; height: 256px; }
.two { left: 117px; top: 310px; width: 693px; height: 283px; }
.two .app { transform-origin: 0 0; transform: scale(.361, .3135) translateY(-12px); }
.handles { position: absolute; left: 109px; top: 257px; }
.layoutopt { position: absolute; left: 824px; top: 310px; }
.stepapp { position: relative; width: 1920px; height: 784px; display: flex; background: #fff; transform-origin: 0 0; transform: scale(.363, .3275); color: #56687d; }
.stepapp .side { width: 200px; padding: 0; }
.stepapp .side a:first-child { margin-top: -23px; }
.work { width: 1660px; margin-left: 25px; }
.top { display: flex; justify-content: space-between; height: 82px; padding-right: 13px; }
.top .btn { height: 38px; padding: 0 17px; }
.forms { width: 672px; font-size: 14px; }
.forms b { display: block; height: 30px; padding: 5px 10px; border: 2px solid #8fd3f3; border-top: 0; }
.forms span { display: block; height: 50px; margin-top: 3px; padding: 5px 10px; border: 3px solid #6cc5f0; border-radius: 4px; }
.wktabs { height: 79px; padding-top: 22px; border-bottom: 1px solid #e0e3e6; display: flex; }
.wktabs span { height: 57px; line-height: 60px; font-size: 16px; padding: 0 17px; }
.wktabs .cur { border-bottom: 5px solid #22a3df; }
.cols { display: flex; gap: 30px; padding-top: 18px; }
.steps { width: 812px; height: 165px; border: 1px solid #d0d3d6; border-radius: 4px; }
.stepbar { height: 69px; background: #f9fafb; padding: 11px 21px; display: flex; gap: 6px; }
.stepbar .pri { background: #0595db; color: #fff; }
.step { height: 47px; display: grid; grid-template-columns: 61px 52px 587px 57px 53px; line-height: 46px; text-align: center; }
.step span { border-right: 1px solid #d8d8d8; }
.step span:nth-child(3) { text-align: left; padding-left: 18px; }
.step span:nth-child(n+4) { color: #000; font-size: 19px; border-right: 0; border-left: 1px solid #d8d8d8; }
.sel { background: #fae5b3; }
.detail { width: 810px; height: 620px; flex: none; padding: 16px 9px; background: #f9fafb; border: 1px solid #dfe2e5; }
.detail .desc { padding-left: 9px; height: 40px; }
.detail h2 { font-size: 20px; line-height: 38px; }
.kv { display: grid; grid-template-columns: 235px auto; column-gap: 29px; line-height: 19px; height: 81px; }
.kv span { text-align: right; }
.kv em { color: #1193d6; }
.box { display: inline-block; width: 15px; height: 15px; border: 2px solid #555; border-radius: 2px; }
.lbl { line-height: 20px; height: 30px; }
.vals { border: 1px solid #d0d3d6; height: 283px; }
.vals div { height: 47px; display: grid; grid-template-columns: 60px 365px auto; border-bottom: 1px solid #d0d3d6; line-height: 46px; }
.vals div:nth-child(even) { background: #fff; }
.vals span { border-right: 1px solid #d0d3d6; padding-left: 20px; }
.vals span:last-child { border-right: 0; }
.ret { margin-top: 20px; height: 20px; }
.inp { height: 32px; border: 1px solid #d0d3d6; background: #fff; line-height: 30px; padding-left: 8px; margin-bottom: 12px; color: #84909e; }
.stepapp .detail h2 .box { border-color: #999; }
.vbar { width: 13px; height: 713px; margin-left: auto; background: #c1c1c1; }
.stepapp .feedback { top: 83px; }

/* status bar */
.status { height: 27px; background: #f1f1f1; border-top: 1px solid #c6c6c6; display: grid; grid-template-columns: 86px 67px 35px 1400px 28px 54px 33px 170px 40px; align-items: center; padding-left: 7px; color: #444; font-size: 13px; letter-spacing: -.1px; }
.lit { height: 26px; width: 41px; background: #c9c9c9; display: flex; align-items: center; justify-content: center; }
```
